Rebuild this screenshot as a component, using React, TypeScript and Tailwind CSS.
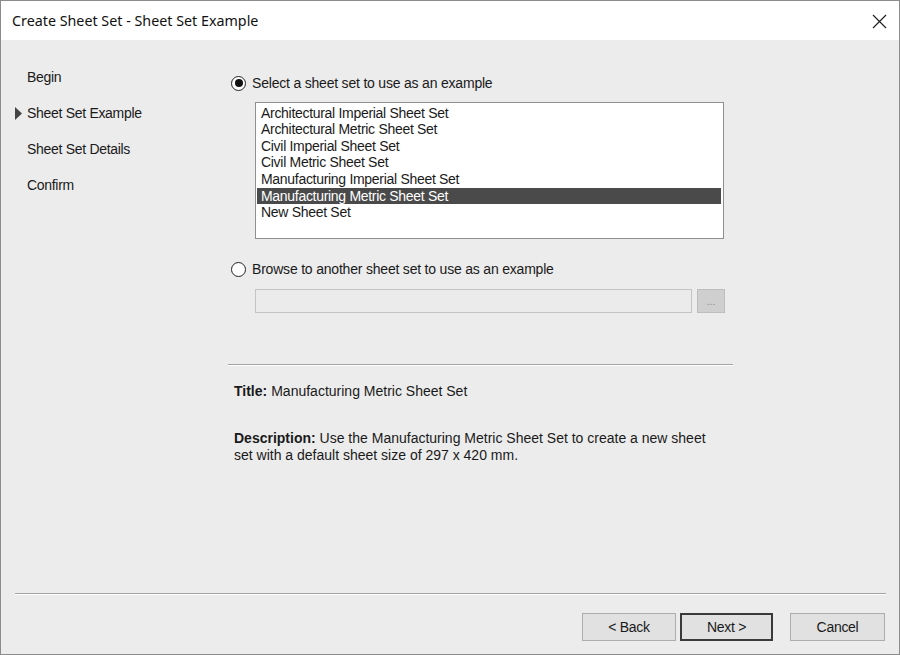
import React from "react";

const sheetSets = [
  "Architectural Imperial Sheet Set",
  "Architectural Metric Sheet Set",
  "Civil Imperial Sheet Set",
  "Civil Metric Sheet Set",
  "Manufacturing Imperial Sheet Set",
  "Manufacturing Metric Sheet Set",
  "New Sheet Set",
];

const steps = ["Begin", "Sheet Set Example", "Sheet Set Details", "Confirm"];

function Radio({ checked }: { checked: boolean }) {
  return (
    <span className="w-[15px] h-[15px] rounded-full border border-[#222] bg-white flex items-center justify-center shrink-0">
      {checked && <span className="w-[8px] h-[8px] rounded-full bg-[#111]" />}
    </span>
  );
}

function Separator({ className }: { className: string }) {
  return <div className={`border-t border-[#a3a3a3] border-b border-b-white ${className}`} />;
}

function Button({ label, isDefault }: { label: string; isDefault?: boolean }) {
  return (
    <button
      className={`w-full h-[28px] flex items-center justify-center bg-[#e1e1e1] text-[14px] text-[#1a1a1a] tracking-[-0.3px] ${
        isDefault ? "border-2 border-[#3a3a3a]" : "border border-[#adadad]"
      }`}
    >
      {label}
    </button>
  );
}

export default function App() {
  const selected = 5;
  return (
    <div
      className="w-[900px] h-[655px] flex flex-col border border-[#8c8c8c] bg-[#ececec] text-[#1a1a1a] overflow-hidden"
      style={{ fontFamily: '"Liberation Sans", Arial, sans-serif' }}
    >
      {/* title bar */}
      <div className="h-[39px] bg-white flex items-center justify-between pl-[11px] pr-[12px] shrink-0">
        <span className="text-[14.3px] text-[#111]" style={{ fontFamily: '"Noto Sans", sans-serif' }}>
          Create Sheet Set - Sheet Set Example
        </span>
        <svg width="15" height="15" viewBox="0 0 15 15" className="mt-[1px]">
          <path d="M1 1 L14 14 M14 1 L1 14" stroke="#222" strokeWidth="1.2" fill="none" />
        </svg>
      </div>

      <div className="h-[553px] flex shrink-0">
        {/* wizard steps */}
        <div className="w-[227px] pl-[14px] pt-[19px] flex flex-col shrink-0">
          {steps.map((s, i) => (
            <div key={s} className="h-[36px] flex items-center text-[14px]">
              <span className="w-[12px] flex items-center">
                {i === 1 && (
                  <svg width="7" height="13" viewBox="0 0 7 13">
                    <path d="M0 0 L7 6.5 L0 13 Z" fill="#444" />
                  </svg>
                )}
              </span>
              <span className="tracking-[-0.3px]">{s}</span>
            </div>
          ))}
        </div>

        {/* example selection */}
        <div className="flex flex-col pt-[33px] text-[14px]">
          <div className="h-[20px] flex items-center gap-[6px] pl-[3px]">
            <Radio checked />
            <span className="tracking-[-0.2px]">Select a sheet set to use as an example</span>
          </div>

          <div className="ml-[27px] mt-[9px] w-[469px] h-[137px] bg-white border border-[#8f8f8f] p-[1px] pt-[1.5px]">
            {sheetSets.map((s, i) => (
              <div
                key={s}
                className={`h-[16.67px] leading-[16.67px] px-[4px] mr-[1px] tracking-[-0.3px] ${
                  i === selected ? "bg-[#4a4a4a] text-white" : ""
                }`}
              >
                {s}
              </div>
            ))}
          </div>

          <div className="h-[20px] flex items-center gap-[6px] pl-[3px] mt-[20px]">
            <Radio checked={false} />
            <span className="tracking-[-0.2px]">Browse to another sheet set to use as an example</span>
          </div>

          <div className="ml-[27px] mt-[10px] flex gap-[5px]">
            <div className="w-[437px] h-[24px] bg-[#ebebeb] border border-[#c4c4c4]" />
            <div className="w-[28px] h-[24px] bg-[#cfcfcf] border border-[#bdbdbd] flex items-end justify-center pb-[5px]">
              <span className="text-[10px] leading-[10px] text-[#8a8a8a]">...</span>
            </div>
          </div>

          <Separator className="mt-[51px] w-[505px]" />

          <div className="mt-[16px] pl-[6px] h-[18px] flex items-center text-[14px]">
            <span className="font-bold">Title:</span>
            <span className="ml-[4px]">Manufacturing Metric Sheet Set</span>
          </div>

          <div className="mt-[30px] pl-[6px] leading-[17px] text-[14px] w-[500px] whitespace-nowrap">
            <span className="font-bold">Description:</span> Use the Manufacturing Metric Sheet Set to create a new sheet
            <br />
            set with a default sheet size of 297 x 420 mm.
          </div>
        </div>
      </div>

      {/* footer */}
      <Separator className="ml-[14px] mr-[13px]" />
      <div className="mt-[18px] flex justify-end pr-[14px]">
        <div className="flex gap-[4px]">
          <div className="w-[94px]">
            <Button label="< Back" />
          </div>
          <div className="w-[93px]">
            <Button label="Next >" isDefault />
          </div>
        </div>
        <div className="w-[95px] ml-[17px]">
          <Button label="Cancel" />
        </div>
      </div>
    </div>
  );
}
